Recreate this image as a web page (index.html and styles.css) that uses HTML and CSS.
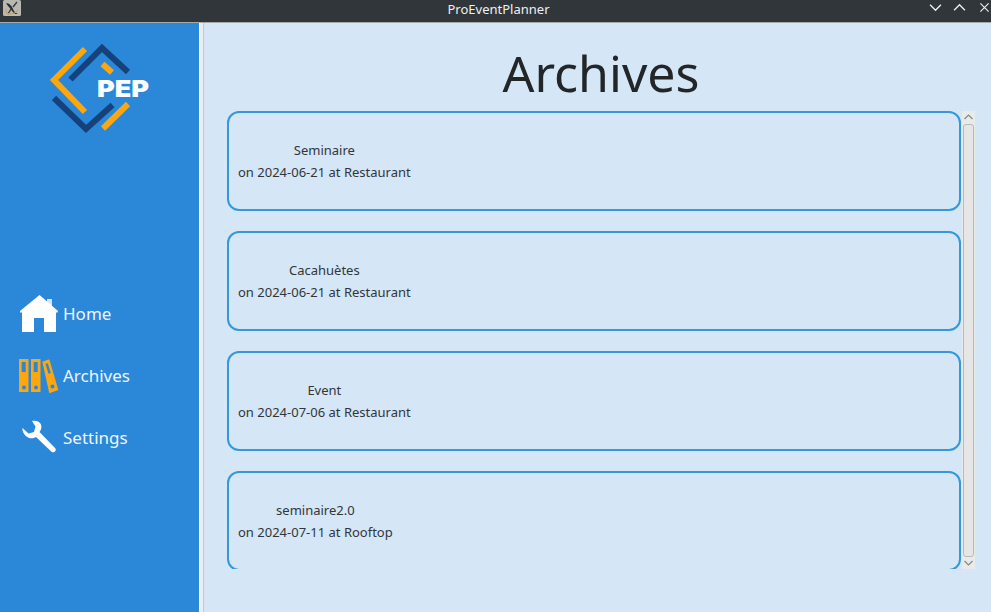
FILE: index.html
```html
<!DOCTYPE html>
<html lang="en">
<head>
<meta charset="utf-8">
<title>ProEventPlanner</title>
<link rel="stylesheet" href="styles.css">
</head>
<body>
<div class="window">
  <header class="titlebar">
    <svg class="app-icon" viewBox="0 0 18 16" aria-hidden="true">
      <rect width="18" height="16" rx="1.5" fill="#b9b8b3"/>
      <path d="M3 3c3 0 6 3 7 6s3 4 5 5h-3C9 12 8 9 6 7S4 4 3 3z" fill="#2a2c30"/>
      <path d="M14 2 10 7M8 9l-3 5" stroke="#3a3c40" stroke-width="1.4" fill="none"/>
      <path d="M3 9c-1 3 1 5 4 5s6-1 8-4" stroke="#d9a13d" stroke-width="1.2" fill="none"/>
    </svg>
    <span class="window-title">ProEventPlanner</span>
    <div class="window-controls">
      <svg viewBox="0 0 12 8" class="win-btn"><path d="M1 1.500 6 6.500 11 1.500" /></svg>
      <svg viewBox="0 0 12 8" class="win-btn"><path d="M1 6.500 6 1.500 11 6.500" /></svg>
      <svg viewBox="0 0 12 12" class="win-btn win-close"><path d="M1.500 1.500 10.500 10.500M10.500 1.500 1.500 10.500" /></svg>
    </div>
  </header>
  <div class="body">
    <aside class="sidebar">
      <svg class="logo" viewBox="40 40 120 100" aria-label="PEP logo">
        <g fill="none" stroke-width="6">
          <path d="M85 49 54 80 85 112" stroke="#fea60b"/>
          <path d="M70.500 79.500 102 48 128 72" stroke="#15427a"/>
          <path d="M54 98 86 129 112.500 105" stroke="#15427a"/>
          <path d="M102.500 64 112 72.500" stroke="#fea60b"/>
          <path d="M128 104 103 128.500" stroke="#fea60b"/>
        </g>
        <text x="97" y="97" class="logo-text" textLength="52" lengthAdjust="spacingAndGlyphs">PEP</text>
      </svg>
      <nav class="nav">
        <a class="nav-item">
          <svg class="nav-icon" viewBox="0 0 40 40">
            <path d="M28 5h5v8h-5z" fill="#d5e6f6"/>
            <path d="M20.500 1 39 17l-.5 1.500H1L1 17z" fill="#fff"/>
            <path d="M3 17h34v21H25V24H15v14H3z" fill="#fff"/>
          </svg>
          <span class="nav-label">Home</span>
        </a>
        <a class="nav-item">
          <svg class="nav-icon" viewBox="0 0 40 40">
            <path d="M0 3h9.500v33H0zM12 3h9.500v33H12z" fill="#fea60b"/>
            <path d="M23.300 5.700l7-2.400 9 30.700-9 3.300z" fill="#fea60b"/>
            <path d="M2.700 6h4v10h-4zM14.700 6h4v10h-4z" fill="#2b88d8"/>
            <path d="M26.500 8l2.300-.8 3 9.800-2.300.8z" fill="#2b88d8"/>
            <circle cx="5" cy="31.500" r="2" fill="#2b88d8"/>
            <circle cx="17" cy="31.500" r="2" fill="#2b88d8"/>
            <circle cx="33.500" cy="30.500" r="2" fill="#2b88d8"/>
          </svg>
          <span class="nav-label">Archives</span>
        </a>
        <a class="nav-item">
          <svg class="nav-icon" viewBox="0 0 40 40">
            <path d="M13 3c4-1 8 .5 9 3.500s0 5.500-1.500 7.500L36 30c1.200 1.300 1 2.500 0 3.500s-2.500 1.200-3.500.2L17 19c-2.500 1.500-6 2-9-.2C5 16.500 3 13 3.500 10l6 5.500 5.500-1.500 1.500-5.500z" fill="#fff"/>
          </svg>
          <span class="nav-label">Settings</span>
        </a>
      </nav>
    </aside>
    <div class="splitter"></div>
    <main class="main">
      <h1 class="page-title">Archives</h1>
      <div class="list-area">
        <div class="list">
          <article class="card"><div class="card-text"><div>Seminaire</div><div>on 2024-06-21 at Restaurant</div></div></article>
          <article class="card"><div class="card-text"><div>Cacahuètes</div><div>on 2024-06-21 at Restaurant</div></div></article>
          <article class="card"><div class="card-text"><div>Event</div><div>on 2024-07-06 at Restaurant</div></div></article>
          <article class="card"><div class="card-text"><div>seminaire2.0</div><div>on 2024-07-11 at Rooftop</div></div></article>
        </div>
        <div class="scrollbar">
          <svg class="scroll-btn" viewBox="0 0 13 12"><path d="M2.500 8 6.500 4 10.500 8"/></svg>
          <div class="scroll-track"><div class="scroll-thumb"></div></div>
          <svg class="scroll-btn" viewBox="0 0 13 12"><path d="M2.500 4 6.500 8 10.500 4"/></svg>
        </div>
      </div>
    </main>
  </div>
</div>
</body>
</html>
```
FILE: styles.css
```css
* { box-sizing: border-box; }
html, body { margin: 0; height: 100%; }
body { font-family: "Noto Sans", "Open Sans", sans-serif; background: #d5e6f6; overflow: hidden; }
.window { width: 991px; height: 612px; display: flex; flex-direction: column; }
.titlebar {
  height: 23px; flex: none; background: #31363b; border-bottom: 1px solid #a9aaa8;
  display: flex; align-items: center; position: relative; color: #eff0f1;
}
.app-icon { width: 18px; height: 16px; margin: -6px 0 0 3px; }
.window-title {
  position: absolute; left: 0; right: 0; top: 0; text-align: center;
  font-size: 13px; line-height: 18px; text-indent: 6px;
}
.window-controls { margin-left: auto; display: flex; align-items: center; gap: 11px; padding: 0 1px 8px 0; }
.win-btn { width: 13px; height: 9px; fill: none; stroke: #eff0f1; stroke-width: 1.2; }
.win-close { width: 11px; height: 11px; margin-left: 2px; }
.body { flex: 1; display: flex; min-height: 0; }
.sidebar { width: 199px; flex: none; background: #2b88d8; display: flex; flex-direction: column; padding-top: 17px; }
.logo { width: 120px; height: 100px; margin-left: 40px; flex: none; }
.logo-text { font-family: "Inter", sans-serif; font-weight: 900; font-size: 23px; fill: #fff; }
.nav { margin-top: 143px; display: flex; flex-direction: column; }
.nav-item { height: 62px; display: flex; align-items: center; padding-left: 19px; color: #eef5fc; font-size: 17px; gap: 4px; }
.nav-label { margin-bottom: 2px; }
.nav-icon { width: 40px; height: 40px; flex: none; }
.splitter { width: 5px; flex: none; background: #eceded; border-left: 1px solid #f8f8f8; border-right: 1px solid #c8c9c9; }
.main { flex: 1; min-width: 0; display: flex; flex-direction: column; padding: 0 16px 43px 23px; }
.page-title { margin: 0; height: 88px; font-size: 50px; font-weight: 400; line-height: 100px; text-align: center; color: #232629; flex: none; }
.list-area { flex: 1; min-height: 0; display: flex; gap: 1px; }
.list { flex: 1; min-width: 0; overflow: hidden; display: flex; flex-direction: column; gap: 20px; }
.card {
  height: 100px; flex: none; border: 2px solid #3498db; border-radius: 12px; padding: 26px 9px 0;
  font-size: 13px; line-height: 22px; color: #31363b;
}
.card-text { display: inline-flex; flex-direction: column; align-items: center; }
.scrollbar { width: 13px; flex: none; display: flex; flex-direction: column; background: #e9eaea; }
.scroll-btn { width: 13px; height: 12px; flex: none; fill: none; stroke: #7f8c8d; stroke-width: 1.2; }
.scroll-track { flex: 1; padding: 1px 1px 0; }
.scroll-thumb { height: 100%; background: #e6e6e6; border: 1px solid #b8b9ba; border-radius: 3px; }
```
